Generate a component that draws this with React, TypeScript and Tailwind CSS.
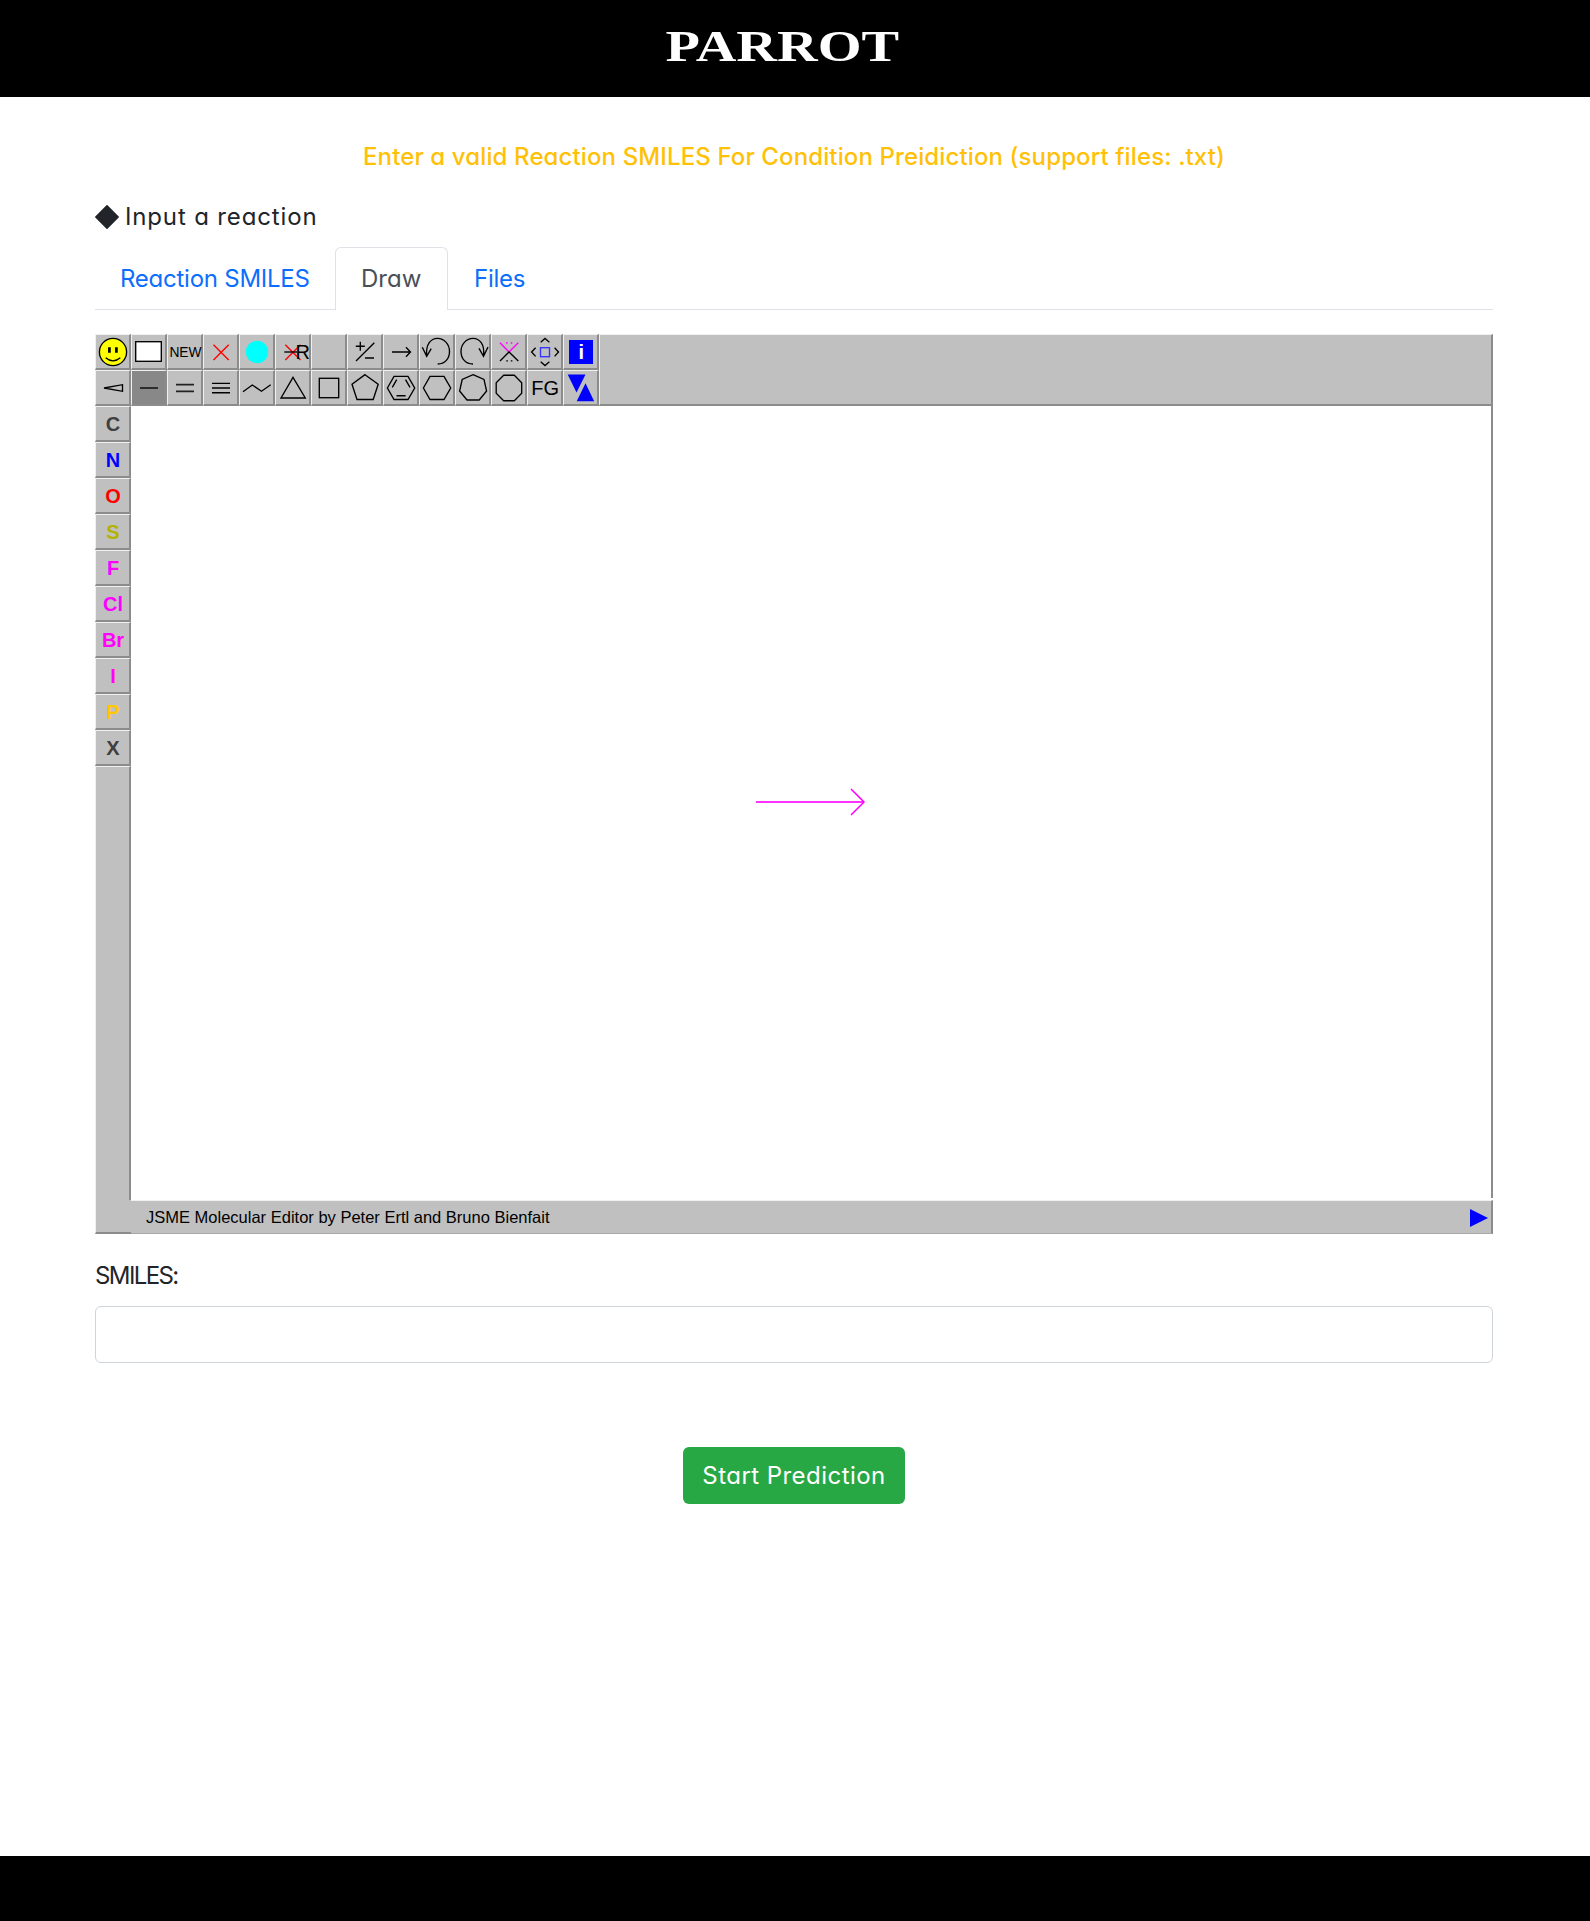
import React from "react";

const UI = "font-['Inter',sans-serif] [font-feature-settings:'cv11'] font-normal";
const ARIAL = "font-['Liberation_Sans',Arial,sans-serif]";

const hexagon = "4.4,18 11,6.3 25,6.3 31.7,18 25,29.5 11,29.5";

const topTools: React.ReactNode[] = [
  <>
    <circle cx="18" cy="18" r="13.6" fill="#ff0" />
    <path d="M14.4 13.3v5.4M21.4 13.3v5.4" strokeWidth="2.7" />
    <path d="M10.7 23.7Q18 30 25.3 23.7" />
  </>,
  <rect x="4.7" y="7.7" width="25.6" height="19.6" fill="#fff" />,
  <text x="2.4" y="23" fontSize="13.8" fill="#000" stroke="none" className={ARIAL}>NEW</text>,
  <path d="M10.5 10.7L25.7 26M25.7 10.7L10.5 26" stroke="#f00" />,
  <circle cx="18" cy="18" r="11.2" fill="#0ff" stroke="none" />,
  <>
    <path d="M10.3 10.7L25.5 26M25.5 10.7L10.3 26" stroke="#f00" />
    <path d="M9.3 18H22" />
    <text x="20.4" y="25" fontSize="20" fill="#000" stroke="none" className={ARIAL}>R</text>
  </>,
  null,
  <path d="M27.3 8.7L9 27M8.8 12.2h9M13.3 7.7v9M18 24h9" />,
  <path d="M9 18H27.5M23 13.3L27.5 18L23 22.7" />,
  <path d="M18.7 30C26 30 30.5 24.5 30.5 17.5C30.5 10 25 4.3 18.5 4.3C12 4.3 6.5 10 7.7 22.3M3.3 13.3L7.7 22.3L12.2 14.7" />,
  <path d="M18 30C10.5 30 6 24.5 6 17.5C6 10 11.5 4.3 18 4.3C24.5 4.3 30 10 28.5 22.3M24 14.3L28.5 22.3L33 13" />,
  <>
    <path d="M9 8.7L18 18L27.3 8.7M15 9h1.6M19.7 9h1.6" stroke="#f0f" />
    <path d="M9 27L18 18L27.3 27M15.3 26.8h1.6M19.8 26.8h1.6" />
  </>,
  <>
    <path d="M13.7 8.2L18 4.5L22.4 8.2M13.7 27.8L18 31.5L22.4 27.8M8.6 13.7L4.6 18L8.6 22.4M27.6 13.7L31.5 18L27.6 22.4" />
    <rect x="13.5" y="13.7" width="9" height="9" stroke="#33f" />
  </>,
  <>
    <rect x="6" y="6" width="24" height="24" fill="#00f" stroke="none" />
    <text x="18.3" y="25.2" fontSize="20" fontWeight="700" textAnchor="middle" fill="#fff" stroke="none" className={ARIAL}>i</text>
  </>,
];

const bottomTools: React.ReactNode[] = [
  <path d="M9 18L27.5 14.7V21.3Z" />,
  <path d="M9 18H27" stroke="#222" strokeWidth="1.8" />,
  <path d="M9 14.7H27M9 21.3H27" stroke="#222" strokeWidth="1.8" />,
  <path d="M9 13.3H27M9 18H27M9 22.7H27" />,
  <path d="M4 21.7L13.3 15L22.5 21.3L31.7 14.7" />,
  <polygon points="18,7.3 30.3,28 6,28" />,
  <rect x="8.3" y="8.3" width="19.4" height="19.4" />,
  <polygon points="18,4.7 31.2,14.3 26.2,29.5 10,29.5 5,14.3" />,
  <>
    <polygon points={hexagon} />
    <path d="M9.3 17.3L13.7 9.7M22.5 9.7L27 17.3M13.5 25.7H22.6" />
  </>,
  <polygon points={hexagon} />,
  <polygon points="18,4.7 29,9.5 31.6,21 24.2,30 12,30 4.6,21 7.2,9.5" />,
  <polygon points="12.7,5.2 23.3,5.2 30.7,12.7 30.7,23.3 23.3,30.7 12.7,30.7 5.2,23.3 5.2,12.7" />,
  <text x="4.2" y="24.6" fontSize="20" fill="#000" stroke="none" className={ARIAL}>FG</text>,
  <path d="M4.7 4.5H22.5L13.5 22.5ZM22.5 13.3L31.2 31.3H13.7Z" fill="#00f" stroke="none" />,
];

const elements = [
  { symbol: "C", color: "#404040" },
  { symbol: "N", color: "#0000ff" },
  { symbol: "O", color: "#ff0000" },
  { symbol: "S", color: "#b3b300" },
  { symbol: "F", color: "#ff00ff" },
  { symbol: "Cl", color: "#ff00ff" },
  { symbol: "Br", color: "#ff00ff" },
  { symbol: "I", color: "#ff00ff" },
  { symbol: "P", color: "#ffc800" },
  { symbol: "X", color: "#404040" },
];

const BEVEL = "border-t border-l border-t-[#f0f0f0] border-l-[#f0f0f0] border-r-2 border-b-2 border-r-[#8c8c8c] border-b-[#8c8c8c]";

function Tool({ children, active }: { children?: React.ReactNode; active?: boolean }) {
  return (
    <button className={`block size-9 shrink-0 ${BEVEL} ${active ? "bg-[#888888]" : "bg-[#c0c0c0]"}`}>
      <svg viewBox="0 0 36 36" className="-mt-px -ml-px block size-9 max-w-none" fill="none" stroke="#000" strokeWidth="1.35">
        {children}
      </svg>
    </button>
  );
}

function Editor() {
  return (
    <section className="mt-6 flex h-[900px] flex-col">
      <div className="flex h-[72px] bg-[#c0c0c0]">
        <div className="flex flex-col">
          <div className="flex">
            {topTools.map((icon, i) => <Tool key={i}>{icon}</Tool>)}
          </div>
          <div className="flex">
            {bottomTools.map((icon, i) => <Tool key={i} active={i === 1}>{icon}</Tool>)}
          </div>
        </div>
        <div className={`flex-1 ${BEVEL}`} />
      </div>
      <div className="flex flex-1">
        <div className="flex w-9 flex-col bg-[#c0c0c0]">
          {elements.map((e) => (
            <Tool key={e.symbol}>
              <text x="18" y="24.5" fontSize="20" fontWeight="700" textAnchor="middle" fill={e.color} stroke="none" className={ARIAL}>
                {e.symbol}
              </text>
            </Tool>
          ))}
          <div className="flex-1 border-t border-l border-r-2 border-t-[#f0f0f0] border-l-[#f0f0f0] border-r-[#8c8c8c]" />
          <div className="h-[34px] border-b-2 border-l border-b-[#8c8c8c] border-l-[#f0f0f0]" />
        </div>
        <div className="flex flex-1 flex-col">
          <div className="mb-[2px] flex flex-1 border-r-2 border-[#8c8c8c] pt-[382px] pl-[625px]">
            <svg viewBox="0 0 112 30" className="h-[30px] w-28" fill="none" stroke="#f0f">
              <path d="M0 14H107" strokeWidth="2" stroke="#ff33ff" />
              <path d="M95 1L108 14L95 27" strokeWidth="1.5" />
            </svg>
          </div>
          <div className="flex h-[34px] items-center justify-between border-t border-r-2 border-b border-t-[#f0f0f0] border-r-[#8c8c8c] border-b-[#a8a8a8] bg-[#c0c0c0] pt-px pr-[3px] pl-[15px]">
            <span className={`${ARIAL} text-[16.5px] whitespace-nowrap text-black`}>JSME Molecular Editor by Peter Ertl and Bruno Bienfait</span>
            <svg viewBox="0 0 18 18" className="size-[18px]"><path d="M0 0L18 9L0 18Z" fill="#00f" /></svg>
          </div>
        </div>
      </div>
    </section>
  );
}

export default function App() {
  return (
    <div className={`flex h-[1921px] flex-col bg-white text-[24px] text-[#212529] ${UI}`}>
      <header className="flex h-[97px] items-start justify-center bg-black pr-[26px]">
        <h1 className="mt-[17px] origin-center scale-x-[1.28] font-['Liberation_Serif',serif] text-[44px] leading-[60px] font-bold text-white">PARROT</h1>
      </header>
      <main className="flex flex-1 flex-col pr-[97px] pl-[95px]">
        <h2 className="mt-[42px] text-center text-[24px] leading-9 font-medium tracking-[0.12px] whitespace-nowrap text-[#ffc107]">
          Enter a valid Reaction SMILES For Condition Preidiction (support files: .txt)
        </h2>
        <div className="mt-6 flex h-9 items-center">
          <svg viewBox="0 0 24 24" className="mr-[6px] size-6"><path d="M12 0.8L23.2 12L12 23.2L0.8 12Z" fill="#212529" stroke="#212529" strokeWidth="1.5" strokeLinejoin="round" /></svg>
          <span className="tracking-[0.85px] whitespace-nowrap">Input a reaction</span>
        </div>
        <nav className="mt-3 flex h-[63px] border-b border-[#dee2e6] leading-9 text-[#0d6efd]">
          <a className="w-[240px] pt-[14px] pl-[25px] tracking-[-0.25px] whitespace-nowrap">Reaction SMILES</a>
          <a className="-mb-px w-[113px] rounded-t-[6px] border border-b-0 border-[#dee2e6] bg-white pt-[13px] pl-[25px] whitespace-nowrap text-[#495057]">Draw</a>
          <a className="pt-[14px] pl-[26px] tracking-[-0.25px] whitespace-nowrap">Files</a>
        </nav>
        <Editor />
        <label className="mt-6 block leading-9 tracking-[-1.6px]">SMILES:</label>
        <input className="mt-3 h-[57px] w-full shrink-0 rounded-[6px] border border-[#ced4da] px-[18px]" />
        <button className="mt-[84px] flex h-[57px] w-[222px] items-center justify-center self-center rounded-[6px] bg-[#28a745] tracking-[0.45px] whitespace-nowrap text-white">
          Start Prediction
        </button>
      </main>
      <footer className="h-[65px] bg-black" />
    </div>
  );
}
